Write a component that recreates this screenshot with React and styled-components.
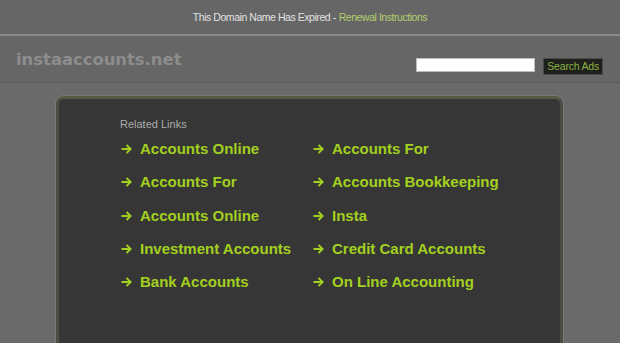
import React from "react";
import styled, { createGlobalStyle } from "styled-components";

const Global = createGlobalStyle`
  html, body { margin: 0; padding: 0; }
  body {
    background: #6a6a6a;
    font-family: "Liberation Sans", Arial, sans-serif;
    overflow: hidden;
  }
`;

const TopBar = styled.div`
  height: 36px;
  background: #666;
  border-bottom: 2px solid #8a8a8a;
  display: flex;
  align-items: center;
  justify-content: center;
  font-size: 10.5px;
  letter-spacing: -0.45px;
  color: #e2e2e2;
  box-sizing: border-box;
`;

const TopLink = styled.a`
  color: #b3cf6e;
  text-decoration: none;
  margin-left: 3px;
`;

const Header = styled.div`
  height: 47px;
  background: #666;
  border-bottom: 1px solid #5a5a5a;
  display: flex;
  align-items: flex-start;
  justify-content: space-between;
  padding: 0 17px 0 16px;
  box-sizing: border-box;
`;

const Logo = styled.div`
  font-family: "DejaVu Sans", Verdana, sans-serif;
  font-weight: bold;
  font-size: 16.4px;
  line-height: 20px;
  color: #8d8d8d;
  margin-top: 14px;
`;

const Search = styled.form`
  display: flex;
  align-items: flex-start;
  gap: 8px;
  margin-top: 22px;
`;

const SearchInput = styled.div`
  width: 117px;
  height: 12px;
  background: #fff;
  border: 1px solid #bdbdbd;
`;

const SearchButton = styled.div`
  height: 15px;
  padding: 0 3px;
  background: #1d201b;
  border: 1px solid #4a4a4a;
  color: #8db043;
  font-size: 10.5px;
  letter-spacing: -0.2px;
  line-height: 15px;
`;

const Main = styled.div`
  padding: 13px 0 0 56px;
`;

const Panel = styled.div`
  width: 507px;
  height: 300px;
  background: #363636;
  border: 3px solid #4b4c44;
  border-top-color: #575a46;
  border-radius: 8px;
  box-shadow: 0 0 1px 1px #7a7a7a;
  padding: 18px 0 0 61px;
  box-sizing: border-box;
`;

const Heading = styled.div`
  font-size: 11px;
  line-height: 14px;
  color: #acacac;
  margin-bottom: 1px;
`;

const Grid = styled.div`
  display: grid;
  grid-template-columns: 192px 192px;
  grid-auto-rows: 33.3px;
`;

const LinkItem = styled.a`
  display: flex;
  align-items: center;
  gap: 8px;
  padding-left: 1px;
  color: #a3d01f;
  font-weight: bold;
  font-size: 15px;
  text-decoration: none;
  white-space: nowrap;
`;

const Arrow = () => (
  <svg width="11" height="10" viewBox="0 0 11 10" style={{ marginTop: 1 }}>
    <path d="M0.5 5H9.5M5.5 1L9.7 5L5.5 9" stroke="#a3d01f" strokeWidth="1.9" fill="none" />
  </svg>
);

const links = [
  "Accounts Online",
  "Accounts For",
  "Accounts For",
  "Accounts Bookkeeping",
  "Accounts Online",
  "Insta",
  "Investment Accounts",
  "Credit Card Accounts",
  "Bank Accounts",
  "On Line Accounting",
];

export default function App() {
  return (
    <>
      <Global />
      <TopBar>
        This Domain Name Has Expired - <TopLink href="#">Renewal Instructions</TopLink>
      </TopBar>
      <Header>
        <Logo>instaaccounts.net</Logo>
        <Search>
          <SearchInput />
          <SearchButton>Search Ads</SearchButton>
        </Search>
      </Header>
      <Main>
        <Panel>
          <Heading>Related Links</Heading>
          <Grid>
            {links.map((l, i) => (
              <LinkItem key={i} href="#">
                <Arrow />
                {l}
              </LinkItem>
            ))}
          </Grid>
        </Panel>
      </Main>
    </>
  );
}
